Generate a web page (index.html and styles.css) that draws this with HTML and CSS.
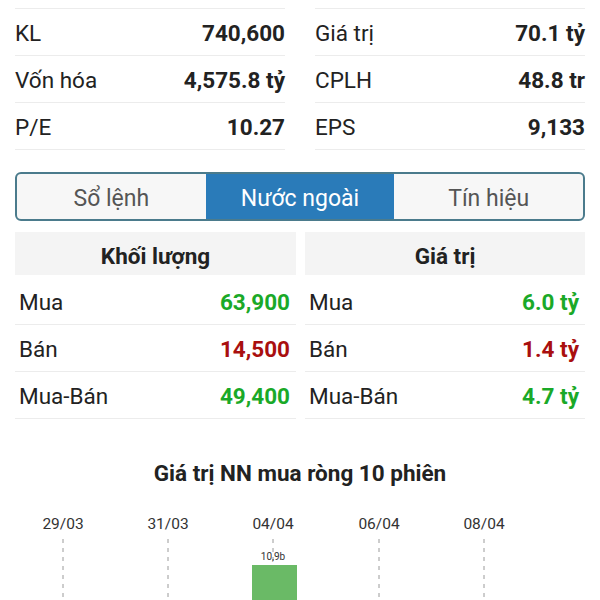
FILE: index.html
```html
<!DOCTYPE html>
<html lang="vi">
<head>
<meta charset="utf-8">
<title>Nước ngoài</title>
<link rel="stylesheet" href="styles.css">
</head>
<body>
<div class="page">
  <section class="stats">
    <div class="stat-col">
      <div class="stat-row"><span class="label">KL</span><span class="value">740,600</span></div>
      <div class="stat-row"><span class="label">Vốn hóa</span><span class="value">4,575.8 tỷ</span></div>
      <div class="stat-row"><span class="label">P/E</span><span class="value">10.27</span></div>
    </div>
    <div class="stat-col">
      <div class="stat-row"><span class="label">Giá trị</span><span class="value">70.1 tỷ</span></div>
      <div class="stat-row"><span class="label">CPLH</span><span class="value">48.8 tr</span></div>
      <div class="stat-row"><span class="label">EPS</span><span class="value">9,133</span></div>
    </div>
  </section>

  <nav class="tabs">
    <div class="tab">Sổ lệnh</div>
    <div class="tab active">Nước ngoài</div>
    <div class="tab">Tín hiệu</div>
  </nav>

  <section class="foreign">
    <div class="ftable">
      <div class="fhead">Khối lượng</div>
      <div class="frow"><span class="label">Mua</span><span class="value up">63,900</span></div>
      <div class="frow"><span class="label">Bán</span><span class="value down">14,500</span></div>
      <div class="frow"><span class="label">Mua-Bán</span><span class="value up">49,400</span></div>
    </div>
    <div class="ftable">
      <div class="fhead">Giá trị</div>
      <div class="frow"><span class="label">Mua</span><span class="value up">6.0 tỷ</span></div>
      <div class="frow"><span class="label">Bán</span><span class="value down">1.4 tỷ</span></div>
      <div class="frow"><span class="label">Mua-Bán</span><span class="value up">4.7 tỷ</span></div>
    </div>
  </section>
</div>

<section class="chart">
  <h2 class="chart-title">Giá trị NN mua ròng 10 phiên</h2>
  <svg class="chart-svg" width="600" height="100" viewBox="0 0 600 100">
    <g class="dates">
      <text x="63" y="27">29/03</text>
      <text x="168" y="27">31/03</text>
      <text x="273" y="27">04/04</text>
      <text x="379" y="27">06/04</text>
      <text x="484" y="27">08/04</text>
    </g>
    <g class="grid">
      <line x1="63" y1="37" x2="63" y2="100"/>
      <line x1="168" y1="37" x2="168" y2="100"/>
      <line x1="379" y1="37" x2="379" y2="100"/>
      <line x1="484" y1="37" x2="484" y2="100"/>
    </g>
    <rect class="bar" x="252" y="63" width="45" height="37"/>
    <line class="grid-line" x1="273" y1="37" x2="273" y2="63"/>
    <text class="bar-label" x="273" y="58">10,9b</text>
  </svg>
</section>
</body>
</html>
```
FILE: styles.css
```css
* { box-sizing: border-box; }

html, body {
  margin: 0;
  padding: 0;
  background: #ffffff;
}

body {
  font-family: Roboto, "Noto Sans", "Liberation Sans", sans-serif;
  color: #222222;
  width: 600px;
  height: 600px;
  overflow: hidden;
}

.page {
  padding: 8px 15px 0;
}

/* top stats */
.stats {
  display: grid;
  grid-template-columns: 1fr 1fr;
  column-gap: 30px;
}

.stat-col {
  border-top: 1px solid #ececec;
}

.stat-row {
  display: flex;
  justify-content: space-between;
  align-items: center;
  height: 47px;
  border-bottom: 1px solid #ececec;
  font-size: 22.5px;
  padding-top: 2px;
}

.label {
  font-weight: 400;
  color: #222;
}

.value {
  font-weight: 700;
  font-size: 22.5px;
  color: #222;
}

/* tabs */
.tabs {
  margin-top: 22px;
  display: grid;
  grid-template-columns: 1fr 1fr 1fr;
  height: 49px;
  border: 2px solid #4b7b8c;
  border-radius: 6px;
  overflow: hidden;
  background: #f7f7f7;
}

.tab {
  display: flex;
  align-items: center;
  justify-content: center;
  font-size: 23px;
  padding-top: 3px;
  color: #555555;
}

.tab.active {
  background: #2a7bb9;
  color: #ffffff;
}

/* foreign tables */
.foreign {
  margin-top: 11px;
  display: grid;
  grid-template-columns: 281px 280px;
  column-gap: 9px;
}

.fhead {
  height: 43px;
  margin-bottom: 3px;
  background: #f4f4f4;
  display: flex;
  align-items: center;
  justify-content: center;
  font-weight: 700;
  font-size: 22.5px;
  padding-top: 4px;
  color: #222;
}

.frow {
  display: flex;
  justify-content: space-between;
  align-items: center;
  height: 47px;
  padding: 1px 6px 0 4px;
  border-bottom: 1px solid #ececec;
  font-size: 22.5px;
}

.frow .value {
  font-size: 22.5px;
}

.up { color: #1aa928; }
.down { color: #a90f0f; }

/* chart */
.chart {
  margin-top: 39px;
}

.chart-title {
  margin: 0;
  text-align: center;
  font-size: 22.5px;
  font-weight: 700;
  color: #222;
  line-height: 30px;
}

.chart-svg {
  display: block;
  margin-top: 14px;
}

.dates text {
  font-family: Roboto, "Noto Sans", "Liberation Sans", sans-serif;
  font-size: 15.5px;
  fill: #333333;
  text-anchor: middle;
}

.grid line,
.grid-line {
  stroke: #9a9a9a;
  stroke-width: 1;
  stroke-dasharray: 4 5;
}

.bar {
  fill: #6aba66;
}

.bar-label {
  font-family: Roboto, "Noto Sans", "Liberation Sans", sans-serif;
  font-size: 10px;
  fill: #333333;
  text-anchor: middle;
}
```
